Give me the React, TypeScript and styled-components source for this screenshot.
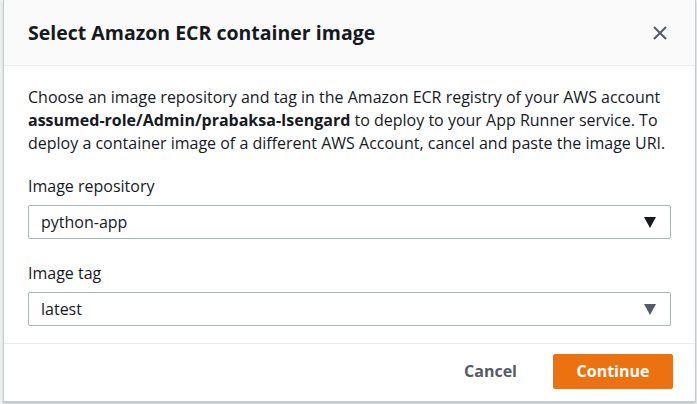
import styled, { createGlobalStyle } from 'styled-components'

const GlobalStyle = createGlobalStyle`
    html, body {
        margin: 0;
        padding: 0;
        background: #eef0f0;
    }
    * {
        box-sizing: border-box;
    }
`

const Page = styled.div`
    width: 697px;
    height: 404px;
    overflow: hidden;
    background: #eef0f0;
    font-family: "Open Sans", "Noto Sans", sans-serif;
    color: #16191f;
`

const Modal = styled.div`
    margin-left: 3px;
    width: 693px;
    height: 402px;
    background: white;
    border: 1px solid #c6cbcc;
    border-top: none;
    box-shadow: 0 2px 2px rgb(0 28 36 / 18%);
    display: flex;
    flex-direction: column;
`

const Header = styled.div`
    height: 66px;
    flex-shrink: 0;
    background: #fafafa;
    border-bottom: 1px solid #eaeded;
    display: flex;
    align-items: center;
    justify-content: space-between;
    padding: 0 24px 0 24px;
`

const Title = styled.h2`
    margin: 0;
    font-size: 19.5px;
    font-weight: 700;
`

const CloseButton = styled.button`
    background: none;
    border: none;
    padding: 0;
    width: 22px;
    height: 22px;
    display: flex;
    align-items: center;
    justify-content: center;
    cursor: pointer;
    color: #545b64;
`

const Body = styled.div`
    flex-shrink: 0;
    padding: 20px 24px 17px 24px;
    display: flex;
    flex-direction: column;
`

const Description = styled.p`
    margin: 0 0 20px 0;
    font-size: 16px;
    line-height: 23px;

    b {
        font-weight: 700;
    }
`

const Field = styled.div`
    display: flex;
    flex-direction: column;
    gap: 8px;
    margin-bottom: 23px;

    &:last-child {
        margin-bottom: 0;
    }
`

const Label = styled.label`
    font-size: 16px;
    line-height: 22px;
`

const Select = styled.div`
    height: 34px;
    border: 1px solid #aab7b8;
    border-radius: 2px;
    display: flex;
    align-items: center;
    justify-content: space-between;
    padding: 0 14px 0 12px;
    font-size: 16px;
`

const Caret = styled.span<{ $muted?: boolean }>`
    width: 0;
    height: 0;
    border-left: 6px solid transparent;
    border-right: 6px solid transparent;
    border-top: 11px solid ${p => (p.$muted ? '#545b64' : '#16191f')};
`

const Footer = styled.div`
    flex-grow: 1;
    border-top: 1px solid #eaeded;
    display: flex;
    align-items: center;
    justify-content: flex-end;
    gap: 16px;
    padding: 0 22px 3px 0;
`

const LinkButton = styled.button`
    background: none;
    border: none;
    font-family: inherit;
    font-size: 16px;
    font-weight: 700;
    color: #545b64;
    padding: 0 20px;
    cursor: pointer;
`

const PrimaryButton = styled.button`
    height: 35px;
    width: 120px;
    background: #ec7211;
    border: 1px solid #ec7211;
    border-radius: 2px;
    font-family: inherit;
    font-size: 16px;
    font-weight: 700;
    color: white;
    cursor: pointer;
`

export default function App() {
    return <Page>
        <GlobalStyle />
        <Modal>
            <Header>
                <Title>Select Amazon ECR container image</Title>
                <CloseButton type='button' aria-label='Close'>
                    <svg width="16" height="16" viewBox="0 0 16 16">
                        <path d="M2 2 L14 14 M14 2 L2 14" stroke="currentColor" strokeWidth="2" fill="none" />
                    </svg>
                </CloseButton>
            </Header>
            <Body>
                <Description>
                    Choose an image repository and tag in the Amazon ECR registry of your AWS account{' '}
                    <b>assumed-role/Admin/prabaksa-Isengard</b> to deploy to your App Runner service. To
                    deploy a container image of a different AWS Account, cancel and paste the image URI.
                </Description>
                <Field>
                    <Label>Image repository</Label>
                    <Select>
                        <span>python-app</span>
                        <Caret />
                    </Select>
                </Field>
                <Field>
                    <Label>Image tag</Label>
                    <Select>
                        <span>latest</span>
                        <Caret $muted />
                    </Select>
                </Field>
            </Body>
            <Footer>
                <LinkButton type='button'>Cancel</LinkButton>
                <PrimaryButton type='button'>Continue</PrimaryButton>
            </Footer>
        </Modal>
    </Page>
}
